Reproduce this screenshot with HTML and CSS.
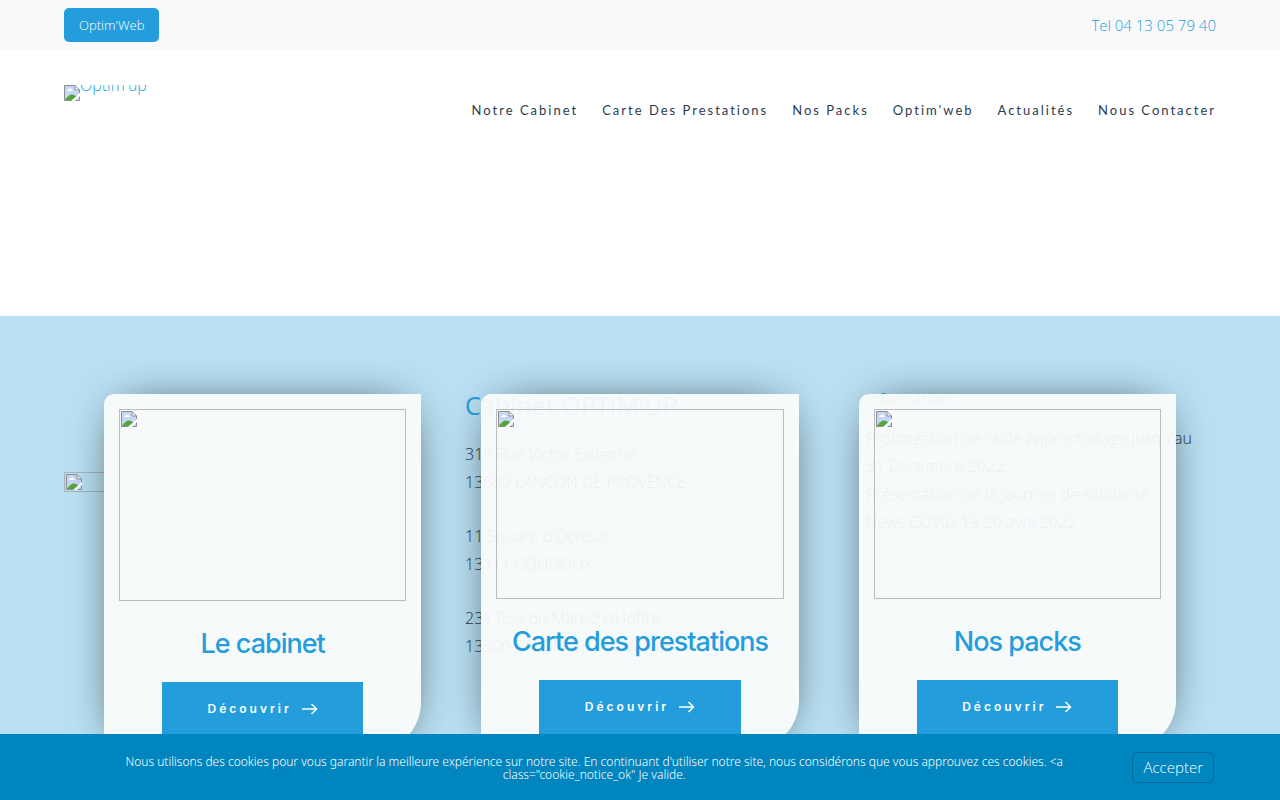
FILE: index.html
```html
<!DOCTYPE html>
<html lang="fr">
<head>
    <meta charset="UTF-8">
    <meta name="viewport" content="width=device-width, initial-scale=1.0">
    <title>Optim'up</title>
    <link rel="stylesheet" href="styles.css">
</head>
<body>
    <svg width="0" height="0" class="sprite" aria-hidden="true">
        <symbol id="broken" viewBox="0 0 16 16">
            <path d="M.5 .5H11L15.5 5V15.5H.5Z" fill="#c6d6f5"/>
            <path d="M11 .5V5H15.500Z" fill="#fff"/>
            <path d="M3 6Q3 4.500 4.500 4.500Q5 3 6.500 3.500Q8 3.500 8 5Q9 5 9 6H3Z" fill="#fff"/>
            <path d="M1 15Q4.500 9.500 8 9.500Q11 9.500 12.500 12V15Z" fill="#56a63c"/>
            <path d="M15.500 8V5L11 .5H.5V15.500H15.500V11M11 .5V5H15.500" fill="none" stroke="#8b8f94"/>
            <path d="M16 8V11L11 16H7Z" fill="#fff"/>
        </symbol>
        <symbol id="arrow" viewBox="0 0 16 12">
            <path d="M0 6H14.500M9.500 1L14.500 6L9.500 11" fill="none" stroke="#fff" stroke-width="1.500"/>
        </symbol>
    </svg>

    <div class="topbar">
        <a href="#" class="topbar-button">Optim'Web</a>
        <a href="tel:0413057940" class="phone">Tel 04 13 05 79 40</a>
    </div>

    <header class="header">
        <a href="#" class="logo">
            <svg class="broken"><use href="#broken"/></svg>
            <span>Optim'up</span>
        </a>
        <nav class="nav">
            <a href="#">Notre Cabinet</a>
            <a href="#">Carte Des Prestations</a>
            <a href="#">Nos Packs</a>
            <a href="#">Optim'web</a>
            <a href="#">Actualités</a>
            <a href="#">Nous Contacter</a>
        </nav>
    </header>

    <main class="stage">
        <!-- Contact details, under the cards -->
        <div class="details">
            <div class="details-image"><svg class="broken"><use href="#broken"/></svg></div>
            <div class="address">
                <h2>Cabinet OPTIM'UP</h2>
                <p>319 Rue Victor Estienne<br>13680 LANCON DE PROVENCE</p>
                <p>11 Square d'Ocreval<br>13111 COUDOUX</p>
                <p>231 Rue du Maréchal Joffre<br>13300 SALON DE PROVENCE</p>
            </div>
            <div class="infos">
                <h3>Informations</h3>
                <p>Prolongation de l'aide apprentissage jusqu'au 31 Décembre 2022.</p>
                <p>Présentation de la journée de solidarité</p>
                <p>News COVID 19-20 avril 2022</p>
            </div>
        </div>

        <!-- Cards -->
        <div class="cards">
            <article class="card">
                <div class="card-image card-image-tall"><svg class="broken"><use href="#broken"/></svg></div>
                <h2>Le cabinet</h2>
                <a href="#" class="card-button">Découvrir <svg class="arrow"><use href="#arrow"/></svg></a>
            </article>
            <article class="card">
                <div class="card-image"><svg class="broken"><use href="#broken"/></svg></div>
                <h2>Carte des prestations</h2>
                <a href="#" class="card-button">Découvrir <svg class="arrow"><use href="#arrow"/></svg></a>
            </article>
            <article class="card">
                <div class="card-image"><svg class="broken"><use href="#broken"/></svg></div>
                <h2>Nos packs</h2>
                <a href="#" class="card-button">Découvrir <svg class="arrow"><use href="#arrow"/></svg></a>
            </article>
        </div>
    </main>

    <div class="cookies">
        <p>Nous utilisons des cookies pour vous garantir la meilleure expérience sur notre site. En continuant d'utiliser notre site, nous considérons que vous approuvez ces cookies. &lt;a class="cookie_notice_ok" Je valide.</p>
        <button type="button">Accepter</button>
    </div>
</body>
</html>
```

FILE: styles.css
```css
* {
    margin: 0;
    padding: 0;
    box-sizing: border-box;
}

body {
    min-height: 100vh;
    display: flex;
    flex-direction: column;
    overflow: hidden;
    font-family: "Open Sans", "Noto Sans", sans-serif;
    font-size: 16px;
    font-weight: 300;
    line-height: 28px;
    color: #2a3b4f;
    background: #fff;
}

a {
    color: #249ddd;
    text-decoration: none;
}

.sprite {
    position: absolute;
}

.broken {
    display: block;
    flex: none;
    width: 16px;
    height: 16px;
}

.topbar {
    display: flex;
    justify-content: space-between;
    align-items: center;
    height: 50px;
    padding: 0 5%;
    background: #f9f9f9;
}

.topbar-button {
    padding: 0 15px;
    border-radius: 5px;
    background: #249ddd;
    color: #fff;
    font-size: 13px;
    line-height: 34px;
}

.phone {
    font-size: 15px;
}

.header {
    display: flex;
    justify-content: space-between;
    align-items: flex-start;
    height: 266px;
    padding: 35px 5% 0;
}

.logo {
    display: flex;
    height: 16px;
    overflow: hidden;
    line-height: 0;
}

.nav {
    display: flex;
    gap: 24px;
    padding-top: 11px;
}

.nav a {
    color: #2a3b4f;
    font-family: Lato, sans-serif;
    font-size: 13px;
    font-weight: 400;
    letter-spacing: 2px;
}

.stage {
    display: grid;
    flex: 1;
    background: #b9e0f3;
}

.details,
.cards {
    grid-area: 1 / 1;
    display: grid;
    grid-template-columns: repeat(3, 1fr);
    align-items: start;
}

.details {
    gap: 51px;
    padding: 74px 5% 0;
}

.details-image {
    width: 252px;
    height: 20px;
    margin-top: 82px;
    padding: 1px;
    border: 1px solid #a9b5ba;
}

.address h2 {
    margin-bottom: 20px;
    color: #249ddd;
    font-size: 25px;
    font-weight: 400;
    line-height: 30px;
}

.address p {
    margin-bottom: 26px;
}

.infos {
    padding-right: 16px;
}

.infos h3 {
    margin-bottom: 18px;
    color: #249ddd;
    font-size: 15px;
    font-weight: 400;
    line-height: 16px;
}

.cards {
    gap: 60px;
    padding: 78px calc(5% + 40px) 0;
}

.card {
    display: flex;
    flex-direction: column;
    align-items: center;
    padding: 15px 15px 16px;
    border-radius: 10px 0 50px 0;
    background: rgba(252, 252, 250, 0.93);
    box-shadow: 0 0 50px -20px #000;
}

.card-image {
    align-self: stretch;
    height: 190px;
    padding: 1px;
    border: 1px solid #bbb;
}

.card-image-tall {
    height: 192px;
}

.card h2 {
    margin: 26px 0 21px;
    color: #249ddd;
    font-family: Inter, sans-serif;
    font-size: 27px;
    font-weight: 500;
    line-height: 34px;
    letter-spacing: -1px;
    white-space: nowrap;
}

.card-button {
    display: flex;
    justify-content: center;
    align-items: center;
    gap: 10px;
    width: 70%;
    height: 54px;
    background: #249ddd;
    color: #fff;
    font-family: Inter, sans-serif;
    font-size: 12px;
    font-weight: 600;
    letter-spacing: 3px;
}

.arrow {
    width: 16px;
    height: 12px;
}

.cookies {
    position: fixed;
    right: 0;
    bottom: 0;
    left: 0;
    display: flex;
    align-items: center;
    gap: 40px;
    padding: 18px 66px 17px 96px;
    background: #0085be;
    color: #fff;
}

.cookies p {
    flex: 1;
    font-family: "Noto Sans", sans-serif;
    font-size: 12px;
    line-height: 13px;
    text-align: center;
}

.cookies button {
    padding: 0 10px;
    border: 1px solid #006a9c;
    border-radius: 5px;
    background: transparent;
    color: #fff;
    font: inherit;
    font-size: 15px;
    line-height: 29px;
}
```
